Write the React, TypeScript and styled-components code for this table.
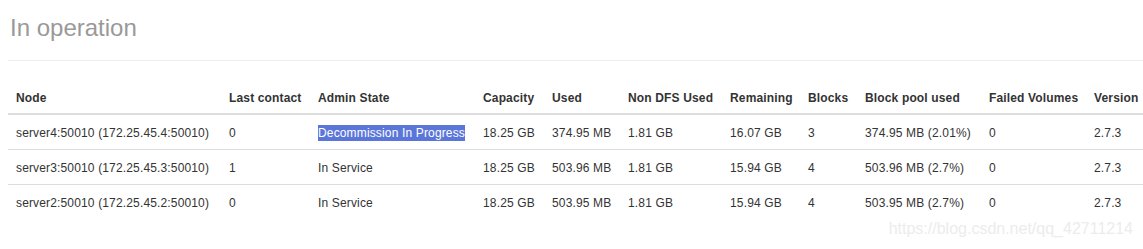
import styled, { createGlobalStyle } from 'styled-components'

const GlobalStyle = createGlobalStyle`
  html, body {
    margin: 0;
    padding: 0;
    background: #fff;
  }
  body {
    overflow: hidden;
    font-family: "Liberation Sans", Arial, sans-serif;
    font-size: 12px;
    line-height: 18px;
    letter-spacing: 0.15px;
    color: #333;
  }
`

const columns = [
  { title: 'Node', width: 213 },
  { title: 'Last contact', width: 89 },
  { title: 'Admin State', width: 165 },
  { title: 'Capacity', width: 69 },
  { title: 'Used', width: 76 },
  { title: 'Non DFS Used', width: 102 },
  { title: 'Remaining', width: 78 },
  { title: 'Blocks', width: 57 },
  { title: 'Block pool used', width: 124 },
  { title: 'Failed Volumes', width: 105 },
  { title: 'Version', width: 57 },
]

const nodes = [
  {
    node: 'server4:50010 (172.25.45.4:50010)',
    lastContact: '0',
    state: 'Decommission In Progress',
    selected: true,
    capacity: '18.25 GB',
    used: '374.95 MB',
    nonDfs: '1.81 GB',
    remaining: '16.07 GB',
    blocks: '3',
    pool: '374.95 MB (2.01%)',
    failed: '0',
    version: '2.7.3',
  },
  {
    node: 'server3:50010 (172.25.45.3:50010)',
    lastContact: '1',
    state: 'In Service',
    capacity: '18.25 GB',
    used: '503.96 MB',
    nonDfs: '1.81 GB',
    remaining: '15.94 GB',
    blocks: '4',
    pool: '503.96 MB (2.7%)',
    failed: '0',
    version: '2.7.3',
  },
  {
    node: 'server2:50010 (172.25.45.2:50010)',
    lastContact: '0',
    state: 'In Service',
    capacity: '18.25 GB',
    used: '503.95 MB',
    nonDfs: '1.81 GB',
    remaining: '15.94 GB',
    blocks: '4',
    pool: '503.95 MB (2.7%)',
    failed: '0',
    version: '2.7.3',
  },
]

const App = () => {
  return (
    <Page>
      <GlobalStyle />
      <PageHeader>
        <Title>In operation</Title>
      </PageHeader>
      <Table>
        <colgroup>
          {columns.map((c) => (
            <col key={c.title} style={{ width: c.width }} />
          ))}
        </colgroup>
        <thead>
          <tr>
            {columns.map((c) => (
              <Th key={c.title}>{c.title}</Th>
            ))}
          </tr>
        </thead>
        <tbody>
          {nodes.map((n) => (
            <tr key={n.node}>
              <Td>{n.node}</Td>
              <Td>{n.lastContact}</Td>
              <Td>{n.selected ? <Selected>{n.state}</Selected> : n.state}</Td>
              <Td>{n.capacity}</Td>
              <Td>{n.used}</Td>
              <Td>{n.nonDfs}</Td>
              <Td>{n.remaining}</Td>
              <Td>{n.blocks}</Td>
              <Td>{n.pool}</Td>
              <Td>{n.failed}</Td>
              <Td>{n.version}</Td>
            </tr>
          ))}
        </tbody>
      </Table>
      <Watermark>https://blog.csdn.net/qq_42711214</Watermark>
    </Page>
  )
}

export default App

const Page = styled.div`
  position: relative;
  width: 1143px;
  height: 249px;
  padding-left: 8px;
  box-sizing: border-box;
`

const PageHeader = styled.div`
  padding: 15px 0 0 2px;
  height: 45px;
  border-bottom: 1px solid #eee;
`

const Title = styled.h1`
  margin: 0;
  font-size: 24px;
  font-weight: normal;
  line-height: 26px;
  letter-spacing: 0;
  color: #999;
`

const Table = styled.table`
  margin-top: 18px;
  width: 1135px;
  table-layout: fixed;
  border-collapse: collapse;
  border-spacing: 0;
`

const Th = styled.th`
  padding: 10px 8px 6px;
  text-align: left;
  font-weight: bold;
  white-space: nowrap;
  vertical-align: bottom;
  border-bottom: 2px solid #ddd;
`

const Td = styled.td`
  padding: 9px 8px 7px;
  white-space: nowrap;
  vertical-align: top;
  border-top: 1px solid #ddd;
`

const Selected = styled.span`
  background: #5b76d9;
  color: #fff;
  padding: 1px 0;
`

const Watermark = styled.div`
  position: absolute;
  right: 10px;
  top: 220px;
  font-size: 16px;
  letter-spacing: 0;
  color: #ececec;
  white-space: nowrap;
`
